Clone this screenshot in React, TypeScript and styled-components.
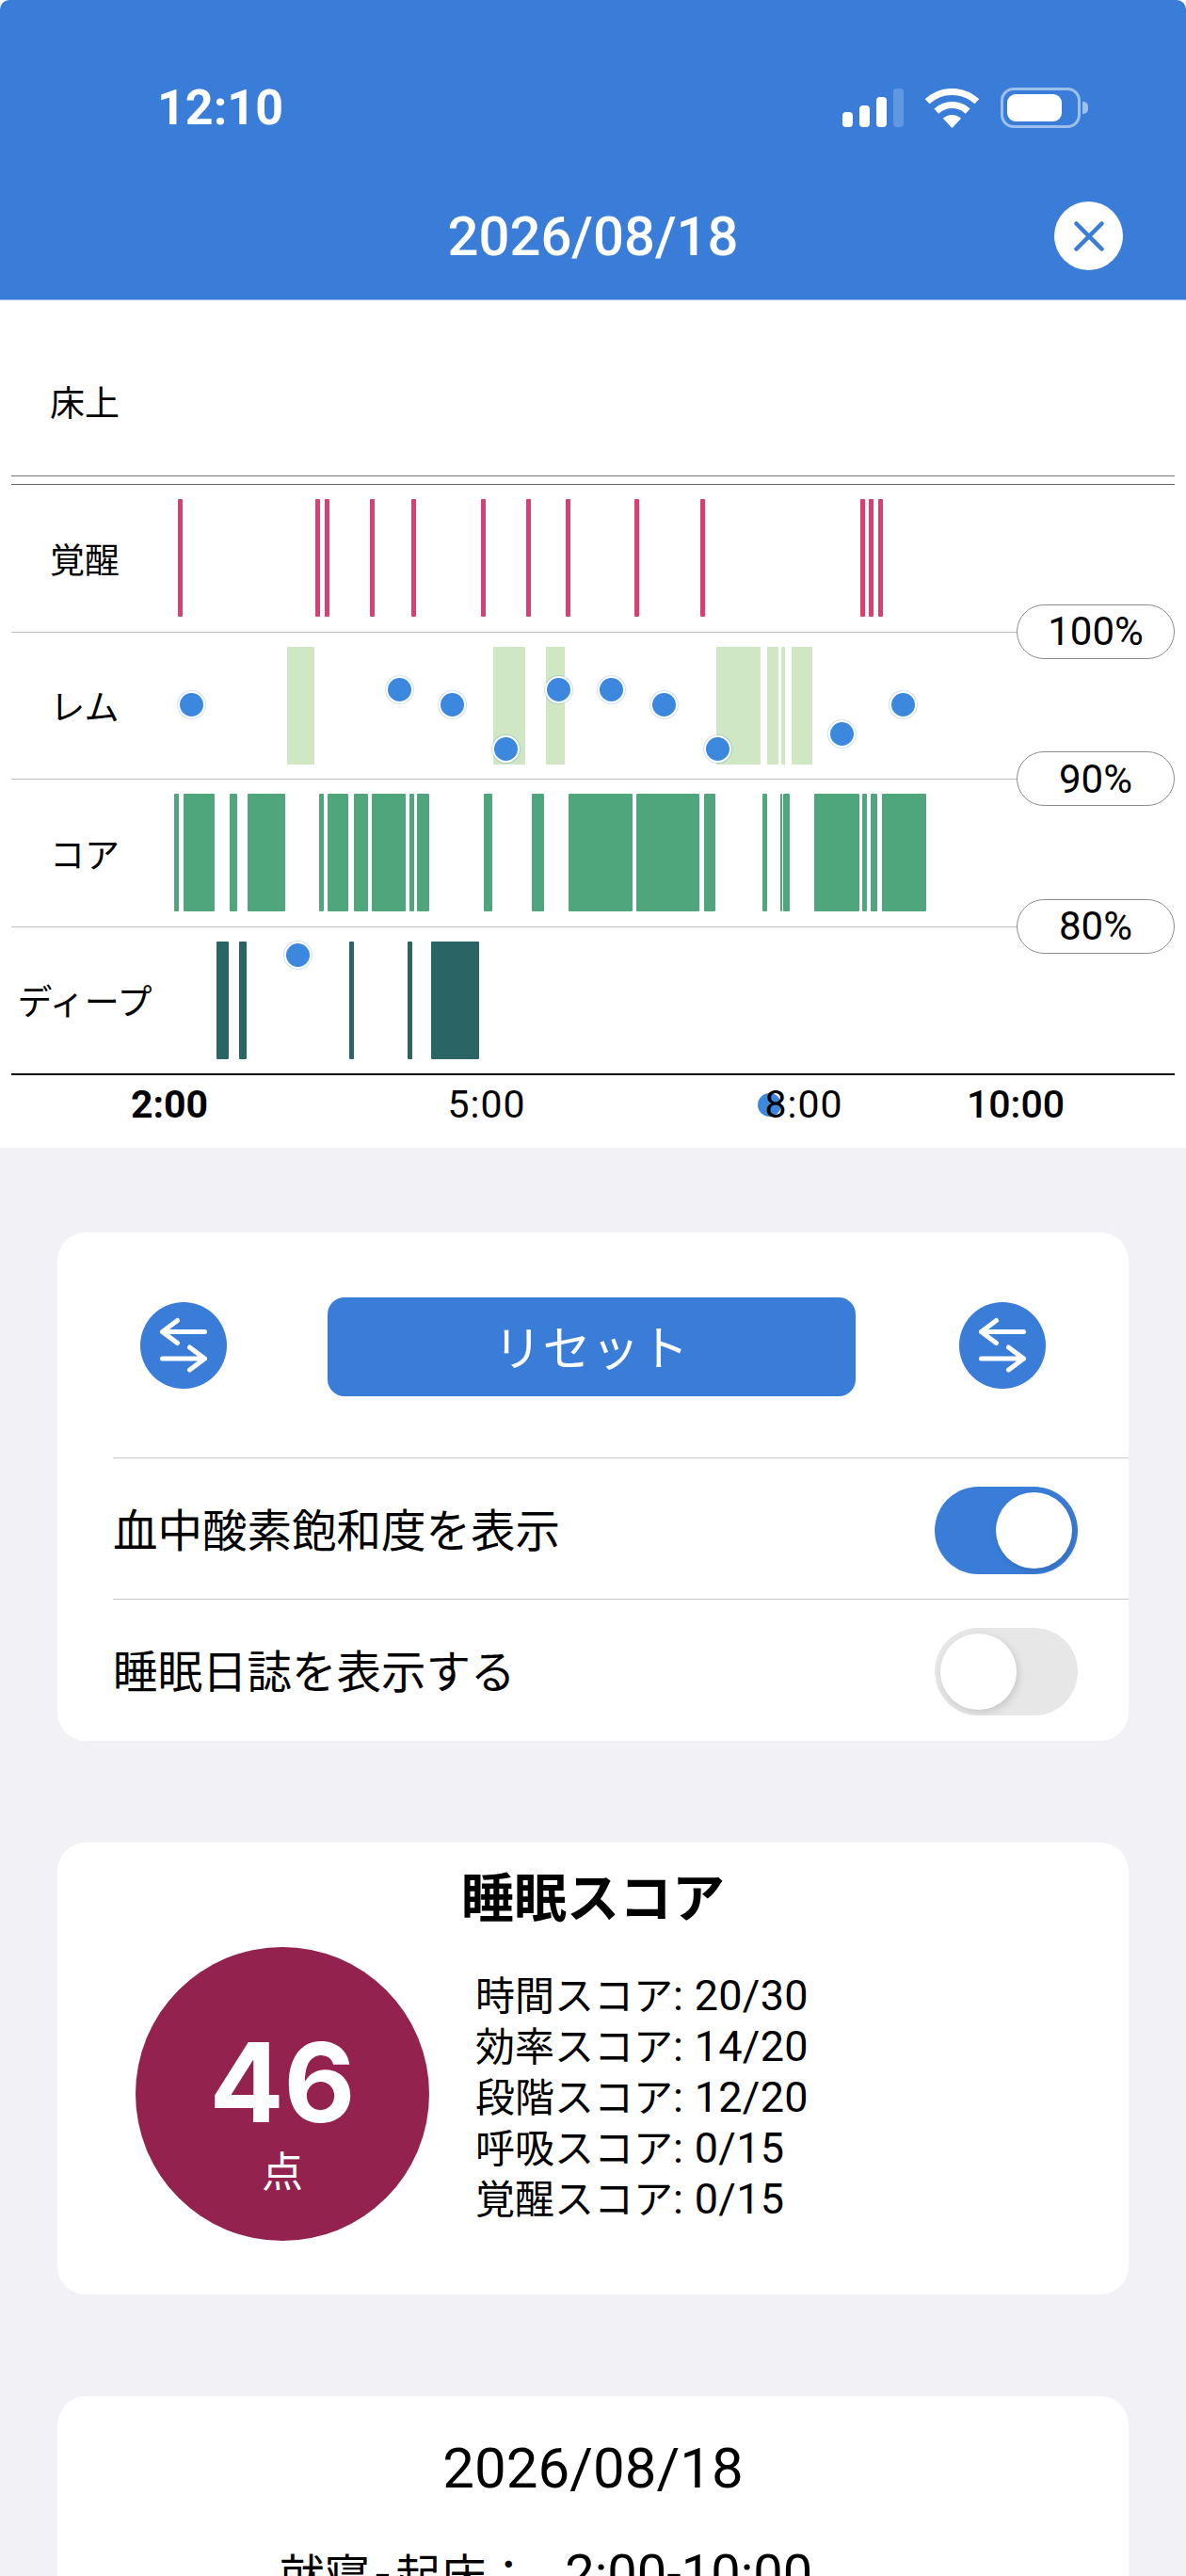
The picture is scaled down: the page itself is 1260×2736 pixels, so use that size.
import styled, { createGlobalStyle } from "styled-components";

const BLUE = "#3a7dd9";
const DOT_BLUE = "#3b88de";
const SANS = `Roboto, "Noto Sans CJK JP", sans-serif`;

type Span = [number, number];
type Dot = [number, number];

const CHART_LEFT = 12;

const ROW_TOPS = [514, 670.5, 827, 983.5];

const stages: { label: string; color: string; spans: Span[]; dots: Dot[] }[] = [
    {
        label: "覚醒",
        color: "#dc3f6f",
        spans: [[189, 194], [335, 340], [345, 350], [393, 398], [437, 442], [511, 516], [559, 564], [601, 606], [674, 679], [744, 749], [914, 919], [923, 928], [933, 938]],
        dots: [],
    },
    {
        label: "レム",
        color: "#cfe7c2",
        spans: [[305, 334], [524, 558], [580, 600], [761, 808], [815, 827], [830, 834], [841, 863]],
        dots: [[204, 749], [425, 733], [481, 749], [538, 796], [594, 733], [650, 733], [706, 749], [763, 796], [895, 780], [960, 749]],
    },
    {
        label: "コア",
        color: "#4fa67d",
        spans: [[185, 190], [195, 228], [244, 252], [263, 303], [339, 344], [348, 370], [376, 391], [395, 431], [435, 440], [443, 456], [514, 523], [565, 578], [604, 672], [676, 743], [748, 760], [810, 815], [829, 831], [832, 839], [865, 913], [916, 921], [925, 932], [937, 984]],
        dots: [],
    },
    {
        label: "ディープ",
        color: "#2b6464",
        spans: [[230, 243], [254, 262], [371, 376], [433, 438], [458, 509]],
        dots: [[317, 1015]],
    },
];

const levels = ["100%", "90%", "80%"];

const axis: { text: string; x: number; weight: number }[] = [
    { text: "2:00", x: 180, weight: 700 },
    { text: "5:00", x: 517, weight: 400 },
    { text: "8:00", x: 854, weight: 400 },
    { text: "10:00", x: 1079, weight: 500 },
];

const scores = [
    { name: "時間スコア", value: "20/30" },
    { name: "効率スコア", value: "14/20" },
    { name: "段階スコア", value: "12/20" },
    { name: "呼吸スコア", value: "0/15" },
    { name: "覚醒スコア", value: "0/15" },
];

const Swap = () => (
    <svg width="62" height="62" viewBox="0 0 62 62" fill="none" stroke="#fff" strokeWidth="5" strokeLinecap="round" strokeLinejoin="round">
        <path d="M53.5 16.5H8.5M24.5 4.5 8.5 16.5l16 12" />
        <path d="M8.5 45h45M37.5 33l16 12-16 12" />
    </svg>
);

const Toggle = ({ on }: { on?: boolean }) => (
    <Track $on={on}>
        <Thumb />
    </Track>
);

export default function App() {
    return (
        <Screen>
            <GlobalStyle />
            <Header>
                <StatusBar>
                    <Clock>12:10</Clock>
                    <StatusIcons>
                        <svg width="65" height="41" viewBox="0 0 65 41" fill="#fff">
                            <rect x="0" y="25" width="11" height="16" rx="4" />
                            <rect x="18" y="18" width="11" height="23" rx="4" />
                            <rect x="36" y="9" width="11" height="32" rx="4" />
                            <rect x="54" y="0" width="11" height="41" rx="4" opacity=".2" />
                        </svg>
                        <svg width="57" height="42" viewBox="0 0 57 42" fill="none" stroke="#fff" strokeWidth="7">
                            <path d="M2.2 13.8A38.5 38.5 0 0 1 54.8 13.8" />
                            <path d="M11.8 24.1A24.5 24.5 0 0 1 45.2 24.1" />
                            <path d="M28.5 42 18.9 31.8A14 14 0 0 1 38.1 31.8Z" fill="#fff" stroke="none" />
                        </svg>
                        <Battery>
                            <BatteryFill />
                        </Battery>
                    </StatusIcons>
                </StatusBar>
                <TitleBar>
                    <HeaderTitle>2026/08/18</HeaderTitle>
                    <CloseButton>
                        <svg width="34" height="34" viewBox="0 0 34 34" fill="none" stroke={BLUE} strokeWidth="4.5" strokeLinecap="round">
                            <path d="M3.5 3.5 30.5 30.5M30.5 3.5 3.5 30.5" />
                        </svg>
                    </CloseButton>
                </TitleBar>
            </Header>

            <Chart>
                <BedRow>
                    <RowLabel>床上</RowLabel>
                </BedRow>
                {stages.map((stage, i) => (
                    <StageRow key={stage.label} $first={i === 0} $last={i === stages.length - 1}>
                        <RowLabel>{stage.label}</RowLabel>
                        {stage.spans.map(([from, to]) => (
                            <Bar
                                key={from}
                                $color={stage.color}
                                style={{ left: from - CHART_LEFT, width: to - from }}
                            />
                        ))}
                        {stage.dots.map(([x, y]) => (
                            <SpoDot key={x} style={{ left: x - CHART_LEFT, top: y - ROW_TOPS[i] - 1 }} />
                        ))}
                        {i < levels.length && <LevelPill>{levels[i]}</LevelPill>}
                    </StageRow>
                ))}
                <Axis>
                    <AxisDot />
                    {axis.map((tick) => (
                        <AxisTick key={tick.text} $weight={tick.weight} style={{ left: tick.x - CHART_LEFT }}>
                            {tick.text}
                        </AxisTick>
                    ))}
                </Axis>
            </Chart>

            <Content>
                <ControlCard>
                    <ButtonRow>
                        <SwapButton><Swap /></SwapButton>
                        <ResetButton>リセット</ResetButton>
                        <SwapButton><Swap /></SwapButton>
                    </ButtonRow>
                    <SettingRow>
                        <SettingLabel>血中酸素飽和度を表示</SettingLabel>
                        <Toggle on />
                    </SettingRow>
                    <SettingRow>
                        <SettingLabel>睡眠日誌を表示する</SettingLabel>
                        <Toggle />
                    </SettingRow>
                </ControlCard>

                <ScoreCard>
                    <ScoreTitle>睡眠スコア</ScoreTitle>
                    <ScoreBody>
                        <ScoreCircle>
                            <ScoreValue>46</ScoreValue>
                            <ScoreUnit>点</ScoreUnit>
                        </ScoreCircle>
                        <ScoreList>
                            {scores.map((line) => (
                                <li key={line.name}>
                                    {line.name}<ScoreNumber>: {line.value}</ScoreNumber>
                                </li>
                            ))}
                        </ScoreList>
                    </ScoreBody>
                </ScoreCard>

                <DiaryCard>
                    <DiaryDate>2026/08/18</DiaryDate>
                    <DiaryLine>
                        就寝<DiaryDash>-</DiaryDash>起床：<DiaryTime>2:00-10:00</DiaryTime>
                    </DiaryLine>
                </DiaryCard>
            </Content>
        </Screen>
    );
}

const GlobalStyle = createGlobalStyle`
    html, body {
        margin: 0;
        padding: 0;
        background: #fff;
    }
`;

const Screen = styled.div`
    width: 1260px;
    height: 2736px;
    overflow: hidden;
    position: relative;
    background: #f1f1f6;
    font-family: ${SANS};
    color: #000;
    border-radius: 10px 10px 0 0;
`;

const Header = styled.header`
    height: 319px;
    background: ${BLUE};
    color: #fff;
    box-sizing: border-box;
    display: flex;
    flex-direction: column;
    border-bottom: 1px solid #9cbce8;
`;

const StatusBar = styled.div`
    display: flex;
    justify-content: space-between;
    align-items: center;
    height: 43px;
    margin-top: 93px;
    padding: 0 112px 0 167px;
`;

const Clock = styled.span`
    font-size: 52px;
    font-weight: 700;
`;

const StatusIcons = styled.div`
    display: flex;
    align-items: center;
    gap: 23px;
`;

const Battery = styled.div`
    width: 85px;
    height: 43px;
    box-sizing: border-box;
    border: 3px solid #9dbfec;
    border-radius: 14px;
    padding: 4px;
    position: relative;

    &::after {
        content: "";
        position: absolute;
        right: -11px;
        top: 12px;
        width: 6px;
        height: 13px;
        border-radius: 0 5px 5px 0;
        background: #9dbfec;
    }
`;

const BatteryFill = styled.div`
    width: 58px;
    height: 100%;
    background: #fff;
    border-radius: 9px;
`;

const TitleBar = styled.div`
    position: relative;
    display: flex;
    justify-content: center;
    align-items: center;
    margin-top: 78px;
    height: 73px;
`;

const HeaderTitle = styled.h1`
    margin: 0;
    font-size: 58px;
    font-weight: 500;
`;

const CloseButton = styled.div`
    position: absolute;
    right: 67px;
    top: 0;
    width: 73px;
    height: 73px;
    border-radius: 50%;
    background: #fff;
    display: flex;
    align-items: center;
    justify-content: center;
`;

const Chart = styled.section`
    height: 900px;
    background: #fff;
    padding: 0 12px;
    box-sizing: border-box;
    display: flex;
    flex-direction: column;
`;

const BedRow = styled.div`
    height: 187px;
    flex: none;
    box-sizing: border-box;
    padding-top: 28px;
    display: flex;
    align-items: center;
    border-bottom: 1px solid #777;
    margin-bottom: 8px;
`;

const StageRow = styled.div<{ $first: boolean; $last: boolean }>`
    position: relative;
    flex: none;
    height: ${(p) => (p.$last ? "158.5px" : "156.5px")};
    box-sizing: border-box;
    display: flex;
    align-items: center;
    border-top: 1px solid ${(p) => (p.$first ? "#666" : "#bdbdbd")};
    ${(p) => p.$last && "border-bottom: 2px solid #111;"}
`;

const RowLabel = styled.span`
    width: 156px;
    text-align: center;
    font-size: 37px;
    white-space: nowrap;
`;

const Bar = styled.div<{ $color: string }>`
    position: absolute;
    top: 15px;
    height: 125px;
    background: ${(p) => p.$color};
    border-radius: 1px;
`;

const SpoDot = styled.div`
    position: absolute;
    width: 25px;
    height: 25px;
    margin: -15px 0 0 -15px;
    box-sizing: content-box;
    border: 2.5px solid #fff;
    border-radius: 50%;
    background: ${DOT_BLUE};
    box-shadow: 0 0 0 1px rgba(59, 136, 222, 0.25);
    z-index: 2;
`;

const LevelPill = styled.div`
    position: absolute;
    right: 0;
    bottom: -29px;
    width: 168px;
    height: 58px;
    box-sizing: border-box;
    background: #fff;
    border: 1.5px solid #8c8c8c;
    border-radius: 29px;
    display: flex;
    align-items: center;
    justify-content: center;
    font-size: 42px;
    z-index: 1;
`;

const Axis = styled.div`
    position: relative;
    flex: 1;
`;

const AxisDot = styled.div`
    position: absolute;
    left: 793px;
    top: 19px;
    width: 25px;
    height: 25px;
    border-radius: 50%;
    background: ${DOT_BLUE};
`;

const AxisTick = styled.span<{ $weight: number }>`
    position: absolute;
    top: 8px;
    transform: translateX(-50%);
    font-size: 41px;
    font-weight: ${(p) => p.$weight};
    letter-spacing: ${(p) => (p.$weight === 400 ? "1px" : "0")};
    line-height: 46px;
`;

const Content = styled.main`
    padding: 90px 61px 0;
    display: flex;
    flex-direction: column;
    gap: 108px;
`;

const Card = styled.div`
    background: #fff;
    border-radius: 30px;
`;

const ControlCard = styled(Card)`
    height: 540px;
    padding-left: 59px;
`;

const ButtonRow = styled.div`
    height: 239px;
    box-sizing: border-box;
    padding: 69px 0 0 29px;
    margin-right: 88px;
    display: flex;
    justify-content: space-between;
    align-items: flex-start;
`;

const SwapButton = styled.div`
    width: 92px;
    height: 92px;
    margin-top: 5px;
    border-radius: 50%;
    background: ${BLUE};
    display: flex;
    align-items: center;
    justify-content: center;
`;

const ResetButton = styled.div`
    width: 561px;
    height: 105px;
    margin-right: 3px;
    padding-bottom: 4px;
    box-sizing: border-box;
    border-radius: 18px;
    background: ${BLUE};
    color: #fff;
    font-size: 51px;
    letter-spacing: 1px;
    display: flex;
    align-items: center;
    justify-content: center;
`;

const SettingRow = styled.div`
    height: 150px;
    box-sizing: border-box;
    border-top: 1px solid #c8c8c8;
    padding-right: 54px;
    display: flex;
    align-items: center;
    justify-content: space-between;
`;

const SettingLabel = styled.span`
    font-size: 47.5px;
    margin-top: -2px;
`;

const Track = styled.div<{ $on?: boolean }>`
    width: 152px;
    height: 93px;
    margin-top: 4px;
    border-radius: 47px;
    background: ${(p) => (p.$on ? BLUE : "#e7e7e7")};
    padding: 6px;
    box-sizing: border-box;
    display: flex;
    justify-content: ${(p) => (p.$on ? "flex-end" : "flex-start")};
`;

const Thumb = styled.div`
    width: 81px;
    height: 81px;
    border-radius: 50%;
    background: #fff;
    box-shadow: 2px 3px 9px rgba(0, 0, 0, 0.14);
`;

const ScoreCard = styled(Card)`
    height: 480px;
    box-sizing: border-box;
    padding-top: 27px;
`;

const ScoreTitle = styled.h2`
    margin: 0;
    text-align: center;
    font-size: 56px;
    line-height: 66px;
    font-weight: 700;
`;

const ScoreBody = styled.div`
    display: flex;
    align-items: center;
    gap: 49px;
    margin-top: 18px;
    padding-left: 83px;
`;

const ScoreCircle = styled.div`
    width: 312px;
    height: 312px;
    box-sizing: border-box;
    padding-top: 79px;
    border-radius: 50%;
    background: #93224e;
    color: #fff;
    display: flex;
    flex-direction: column;
    align-items: center;
`;

const ScoreValue = styled.div`
    font-family: Inter, sans-serif;
    font-size: 117px;
    font-weight: 700;
    line-height: 130px;
`;

const ScoreUnit = styled.div`
    font-size: 44px;
    line-height: 62px;
`;

const ScoreList = styled.ul`
    margin: 0;
    padding: 9px 0 0;
    list-style: none;
    font-size: 42px;
    line-height: 54px;
`;

const ScoreNumber = styled.span`
    font-size: 45px;
    line-height: 1;
    letter-spacing: 0.3px;
`;

const DiaryCard = styled(Card)`
    height: 400px;
    padding-top: 43px;
    text-align: center;
`;

const DiaryDate = styled.div`
    font-size: 60px;
    line-height: 68px;
`;

const DiaryLine = styled.div`
    margin-top: 50px;
    padding-right: 100px;
    font-size: 48px;
    line-height: 60px;
`;

const DiaryDash = styled.span`
    font-size: 56px;
    line-height: 1;
    margin: 0 6px;
`;

const DiaryTime = styled.span`
    font-size: 56px;
    line-height: 1;
    margin-left: 36px;
`;
